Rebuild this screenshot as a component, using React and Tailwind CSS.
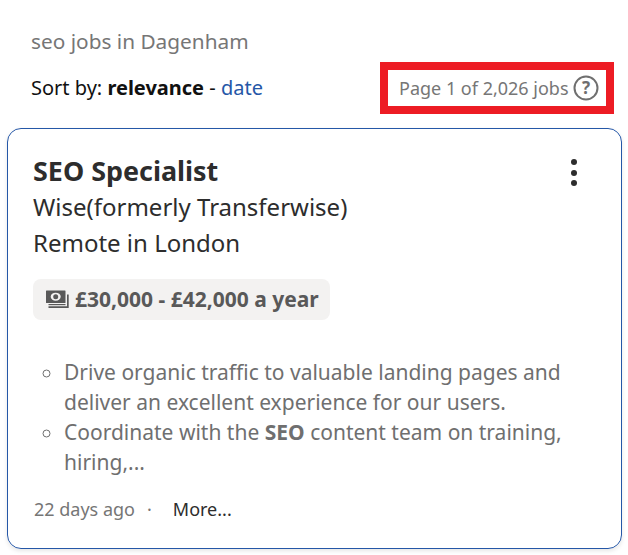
const font = { fontFamily: '"Noto Sans", sans-serif' };

function Money() {
  return (
    <svg width="24" height="21" viewBox="0 0 24 21" className="block shrink-0">
      <rect x="1" y="1.500" width="19.500" height="12.500" rx="0.500" fill="#595959" />
      <ellipse cx="10.700" cy="7.700" rx="5" ry="4" fill="#f3f2f1" />
      <circle cx="10.700" cy="7.700" r="2.500" fill="#595959" />
      <path fill="#595959" d="M22 5.500h1.700V19H3.500v-1.700H22z" />
      <path fill="#595959" d="M3.500 15h17v1.200h-17z" />
    </svg>
  );
}

export default function App() {
  return (
    <div style={font} className="w-[628px] h-[555px] bg-white px-[7px] overflow-hidden">
      <div className="pl-6 pt-[27px] text-[20.8px] leading-7 text-[#767676]">seo jobs in Dagenham</div>
      <div className="flex items-center justify-between pl-6 pr-[7px] mt-[7px] h-[52px]">
        <div className="text-xl leading-7 text-[#111111]">
          Sort by: <b className="font-bold">relevance</b> - <span className="text-[#2557a7]">date</span>
        </div>
        <div className="flex items-center w-[234px] h-[52px] border-8 border-[#ed1c24] pl-[11px] text-lg text-[#767676]">
          <span>Page 1 of 2,026 jobs</span>
          <svg width="26" height="26" viewBox="0 0 26 26" className="ml-[4px]">
            <circle cx="13" cy="13" r="11.500" fill="none" stroke="#6f6f6f" strokeWidth="2" />
            <text x="13" y="19" textAnchor="middle" fontSize="17" fontWeight="700" fill="#6f6f6f" fontFamily="Noto Sans">?</text>
          </svg>
        </div>
      </div>
      <div className="relative mt-[14px] h-[421px] w-[615px] rounded-[14px] border border-[#2557a7] pl-[25px] pt-[24px] shadow-[0_2px_4px_rgba(0,0,0,0.1)]">
        <div className="text-[26.900px] leading-[36px] font-bold text-[#2d2d2d]">SEO Specialist</div>
        <div className="text-2xl leading-[36px] text-[#2d2d2d]">Wise(formerly Transferwise)</div>
        <div className="text-2xl leading-[36px] text-[#2d2d2d]">Remote in London</div>
        <div className="mt-[18px] inline-flex h-[41px] items-center gap-[6px] rounded-lg bg-[#f3f2f1] pl-[12px] pr-[11px] text-[21px] font-bold text-[#595959]">
          <Money />
          <span>£30,000 - £42,000 a year</span>
        </div>
        <ul className="mt-[37px] list-[circle] pl-[31px] pr-[30px] text-[21px] leading-[30px] text-[#6f6f6f]">
          <li>Drive organic traffic to valuable landing pages and deliver an excellent experience for our users.</li>
          <li>Coordinate with the <b className="font-bold">SEO</b> content team on training, hiring,...</li>
        </ul>
        <div className="mt-[18px] ml-px flex items-center text-lg leading-7">
          <span className="text-[#767676]">22 days ago</span>
          <span className="ml-[12px] text-[#767676]">·</span>
          <span className="ml-[21px] text-[#2d2d2d]">More...</span>
        </div>
        <div className="absolute right-[44px] top-[30px] flex flex-col gap-[4.500px]">
          <span className="size-[6px] rounded-full bg-[#2d2d2d]" />
          <span className="size-[6px] rounded-full bg-[#2d2d2d]" />
          <span className="size-[6px] rounded-full bg-[#2d2d2d]" />
        </div>
      </div>
    </div>
  );
}
